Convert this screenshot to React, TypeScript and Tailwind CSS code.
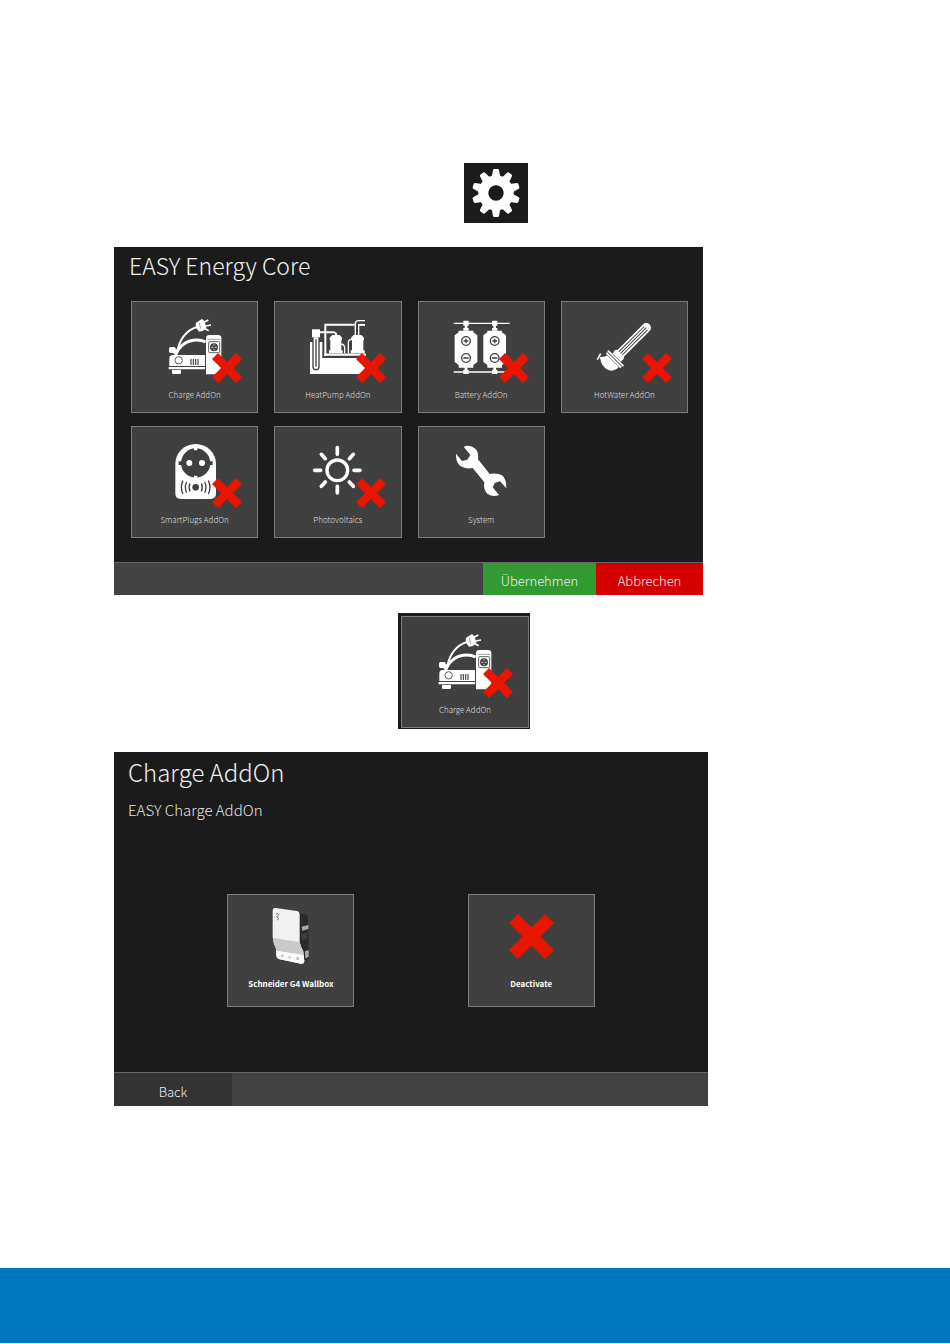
import type { ReactNode } from "react";

const FACE = "font-['Noto_Sans_CJK_SC','Noto_Sans',sans-serif]";
const DARK = "#404040";

function Cross({ className }: { className: string }) {
  return (
    <svg viewBox="0 0 90 90" className={className} aria-hidden="true">
      <path d="M18 0 45 27 72 0 90 18 63 45 90 72 72 90 45 63 18 90 0 72 27 45 0 18Z" fill="#e81500" />
    </svg>
  );
}

function Icon({ box, children }: { box: string; children: ReactNode }) {
  return (
    <svg viewBox={box} className="size-14 shrink-0 overflow-visible" fill="none" aria-hidden="true">
      {children}
    </svg>
  );
}

function ChargeIcon() {
  return (
    <Icon box="115 63 168 168">
      <path d="M146 164C150 128 172 96 206 87" stroke="#fff" strokeWidth="6" />
      <path d="M152 150C160 124 178 102 203 91" stroke={DARK} strokeWidth="1" strokeDasharray="3 3" />
      <path d="M202 74 220 63 228 70 233 91 222 99 211 101 201 88Z" fill="#fff" />
      <path d="M226 73 239 66M231 84 247 81M229 92 240 98" stroke="#fff" strokeWidth="5" />
      <path d="M212 75 216 92" stroke={DARK} strokeWidth="1.5" />
      <path d="M141 172C149 142 178 126 204 126Q220 126 231 132" stroke="#fff" strokeWidth="9" />
      <rect x="121" y="147" width="20" height="18" rx="5" fill="#fff" />
      <path d="M141 152 150 158 142 172 134 166Z" fill="#fff" />
      <path d="M132 171H229V204H122V182Q122 171 132 171Z" fill="#fff" />
      <path d="M120 207H229V214H120Z" fill="#fff" />
      <path d="M130 216H157V224Q157 228 153 228H134Q130 228 130 224Z" fill="#fff" />
      <circle cx="150" cy="187" r="11" stroke={DARK} strokeWidth="2.5" />
      <path d="M187 183V201M194 183V201M201 183V201M208 183V201" stroke={DARK} strokeWidth="3.5" />
      <path d="M232 229V121Q232 111 242 111H268Q278 111 278 121V229Z" fill="#fff" />
      <path d="M237 124H274" stroke={DARK} strokeWidth="1.5" />
      <rect x="240" y="131" width="33" height="33" rx="3" stroke={DARK} strokeWidth="2.5" />
      <circle cx="256" cy="148" r="12" fill={DARK} />
      <path d="M248 148H254M258 148H264M256 139V143M256 153V157" stroke="#fff" strokeWidth="2.5" />
    </Icon>
  );
}

function HeatPumpIcon() {
  return (
    <Icon box="115 63 168 168">
      <path d="M115 132H152V180H283V228H115Z" fill="#fff" />
      <path d="M161 174V80H280" stroke="#fff" strokeWidth="6" />
      <path d="M158 170H283" stroke="#fff" strokeWidth="7" />
      <path d="M256 114V80Q256 70 265 70H280" stroke={DARK} strokeWidth="14" />
      <path d="M251 114V78Q251 68 261 68H280M261 114V80H280" stroke="#fff" strokeWidth="4" />
      <path d="M143 103H184Q194 103 194 114" stroke="#fff" strokeWidth="6" />
      <path d="M124 116V206A9 9 0 0 0 142 206V116Z" fill="#fff" stroke={DARK} strokeWidth="4" />
      <path d="M133 124V206" stroke={DARK} strokeWidth="4" />
      <rect x="121" y="94" width="24" height="24" fill="#fff" />
      <path d="M182 111H204L211 119V127H209V157H213V166H172V157H176V127H174V119Z" fill="#fff" />
      <path d="M246 111H269L277 119V127H275V157H279V166H237V157H241V127H238V119Z" fill="#fff" />
      <path d="M209 138Q219 140 219 150V166" stroke="#fff" strokeWidth="4" />
      <path d="M230 166V134Q230 124 240 124" stroke="#fff" strokeWidth="4" />
    </Icon>
  );
}

function Cell({ x }: { x: number }) {
  return (
    <g transform={`translate(${x} 0)`}>
      <path d="M-8 68H8V83H-8ZM-8 215H8V228H-8ZM-4 83H4V92H-4ZM-8 90H8V98H-8ZM-4 207H4V216H-4Z" fill="#fff" />
      <path d="M-22 98H22V103L34 112V192L22 201V209H-22V201L-34 192V112L-22 103Z" fill="#fff" />
      <circle cy="129" r="13" stroke={DARK} strokeWidth="4" />
      <circle cy="180" r="13" stroke={DARK} strokeWidth="4" />
      <path d="M-7 129H7M0 122V136M-8 180H8" stroke={DARK} strokeWidth="4" />
    </g>
  );
}

function BatteryIcon() {
  return (
    <Icon box="118 63 168 168">
      <path d="M120 76H288M120 222H288" stroke="#fff" strokeWidth="4" />
      <Cell x={157} />
      <Cell x={243} />
    </Icon>
  );
}

function HotWaterIcon() {
  return (
    <Icon box="115 63 168 168">
      <g transform="translate(174 181) rotate(-45)">
        <path d="M10-14H130A14 14 0 0 1 130 14H10Z" fill="#fff" />
        <path d="M20-7H128M20 0H130M20 7H128" stroke={DARK} strokeWidth="3" />
        <path d="M4-18H16Q20-18 20-14V14Q20 18 16 18H4Z" fill="#fff" />
        <path d="M0-33V33" stroke="#fff" strokeWidth="5" />
        <path d="M-8-31V31" stroke="#fff" strokeWidth="6" />
        <path d="M-12-25V25Q-22 27-32 20Q-45 10-43-8L-38-25Z" fill="#fff" />
      </g>
      <path d="M126 178 150 174 160 190 134 202Z" fill="#fff" />
      <path d="M129 167 119 185" stroke="#fff" strokeWidth="5" />
    </Icon>
  );
}

function SmartPlugIcon() {
  return (
    <Icon box="115 66 168 168">
      <path d="M140 126A61 60 0 0 1 262 126V214Q262 231 245 231H157Q140 231 140 214Z" fill="#fff" />
      <circle cx="201" cy="123" r="44" fill={DARK} />
      <path d="M150 118H160V129H150ZM242 118H252V129H242Z" fill={DARK} />
      <path d="M196 78H206V85H196ZM196 161H206V168H196Z" fill="#fff" />
      <circle cx="182" cy="123" r="9" fill="#fff" />
      <circle cx="220" cy="123" r="9" fill="#fff" />
      <circle cx="201" cy="196" r="10" fill={DARK} />
      <path d="M184 184Q178 196 184 208M174 180Q166 196 174 212M163 176Q153 196 163 216M218 184Q224 196 218 208M228 180Q236 196 228 212M239 176Q249 196 239 216" stroke={DARK} strokeWidth="4" />
    </Icon>
  );
}

function SunIcon() {
  return (
    <Icon box="115 66 168 168">
      <circle cx="197" cy="145" r="31" stroke="#fff" strokeWidth="10" />
      <path d="M197 77V97M197 193V213M129 145H147M247 145H265M149 97 161 110M245 97 233 110M149 193 161 180M245 193 233 180" stroke="#fff" strokeWidth="11" strokeLinecap="round" />
    </Icon>
  );
}

function WrenchIcon() {
  return (
    <Icon box="545 66 168 168">
      <path
        d="M577 74Q596 67 612 80Q623 91 620 112L655 156Q676 152 692 160Q706 171 705 199L686 178L671 182L664 196L683 219Q665 226 649 216Q635 203 639 181L604 138Q582 142 567 132Q553 121 554 95L572 117L588 113L597 99Z"
        fill="#fff"
      />
    </Icon>
  );
}

function WallboxIcon() {
  return (
    <Icon box="458 490 168 168">
      <path d="M564 502 592 512 596 640 578 652 568 600Z" fill="#292a2d" />
      <path d="M574 546 594 541V553L576 558ZM584 620 595 616V636L585 642Z" fill="#a9abae" />
      <path d="M572 570 590 564V580L576 588Z" fill="#3d4046" />
      <path d="M487 497Q487 489 496 490L560 499Q568 501 568 508V592Q570 604 578 618L582 648Q582 658 572 657L508 644Q498 641 498 632L497 612Q489 596 487 578Z" fill="#f1f1f2" />
      <path d="M488 580 568 592Q570 606 580 622V632L499 619 497 612Q489 598 488 580Z" fill="#c9cacc" />
      <path d="M498 618 580 631 582 648Q582 658 572 657L508 644Q498 641 498 632Z" fill="#fafafa" />
      <path d="M497 508Q503 503 505 510L499 517 505 521 501 527" stroke="#6b6d70" strokeWidth="3" />
      <circle cx="516" cy="634" r="3.5" fill="#b5b6b8" />
      <circle cx="538" cy="638" r="3.5" fill="#c4c5c7" />
      <circle cx="562" cy="642" r="4" fill="#aeb0b2" />
    </Icon>
  );
}

function GearIcon() {
  const teeth = [0, 36, 72, 108, 144, 180, 216, 252, 288, 324];
  return (
    <svg viewBox="-72 -72 144 144" className="size-12" aria-hidden="true">
      <g fill="#fff">
        {teeth.map((angle) => (
          <path key={angle} d="M-13-48-9-69Q-8-72-5-72H5Q8-72 9-69L13-48Z" transform={`rotate(${angle})`} />
        ))}
        <circle r="53" />
      </g>
      <circle r="23" fill="#1b1b1b" />
    </svg>
  );
}

type TileProps = { label: string; icon: ReactNode; inactive?: boolean };

function Tile({ label, icon, inactive }: TileProps) {
  return (
    <button type="button" className="relative flex h-28 w-full flex-col items-center border border-[#7c7c7c] bg-[#404040] pt-[17px]">
      {icon}
      <span className="mt-3.5 text-[8px] leading-3 font-light whitespace-nowrap text-[#dedede]">{label}</span>
      {inactive && <Cross className="absolute top-[51px] right-[15px] size-[30px]" />}
    </button>
  );
}

function Choice({ label, icon }: TileProps) {
  return (
    <button type="button" className="flex h-[113px] w-[127px] flex-col items-center border border-[#7c7c7c] bg-[#404040] pt-[13px]">
      <span className="flex size-14 items-center justify-center">{icon}</span>
      <span className="mt-3.5 text-[8px] leading-3 font-bold whitespace-nowrap text-white">{label}</span>
    </button>
  );
}

const addOns: TileProps[] = [
  { label: "Charge AddOn", icon: <ChargeIcon />, inactive: true },
  { label: "HeatPump AddOn", icon: <HeatPumpIcon />, inactive: true },
  { label: "Battery AddOn", icon: <BatteryIcon />, inactive: true },
  { label: "HotWater AddOn", icon: <HotWaterIcon />, inactive: true },
  { label: "SmartPlugs AddOn", icon: <SmartPlugIcon />, inactive: true },
  { label: "Photovoltaics", icon: <SunIcon />, inactive: true },
  { label: "System", icon: <WrenchIcon /> },
];

export default function App() {
  return (
    <div className={`flex min-h-screen flex-col bg-white ${FACE}`}>
      <main className="flex flex-col px-[114px] pt-[163px] pb-20">
        <button type="button" aria-label="Settings" className="ml-[350px] flex h-[60px] w-16 items-center justify-center bg-[#1b1b1b]">
          <GearIcon />
        </button>

        <section className="mt-6 w-full max-w-[589px] bg-[#1b1b1b]">
          <h1 className="px-[15px] pt-0.5 text-[23px] leading-8 font-light text-[#f2f2f2]">EASY Energy Core</h1>
          <div className="mt-5 grid grid-cols-4 gap-x-4 gap-y-[13px] pr-[15px] pl-[17px]">
            {addOns.map((addOn) => (
              <Tile key={addOn.label} {...addOn} />
            ))}
          </div>
          <div className="mt-6 flex h-[33px] justify-end border-t border-[#666] bg-[#424242] text-[13px] font-light text-[#eee]">
            <button type="button" className="w-[113px] bg-[#339933] pt-1">Übernehmen</button>
            <button type="button" className="w-[107px] bg-[#d40000] pt-1">Abbrechen</button>
          </div>
        </section>

        <div className="mt-[18px] ml-[284px] w-[132px] bg-[#1b1b1b] pt-[3px] pr-px pb-px pl-[3px]">
          <Tile label="Charge AddOn" icon={<ChargeIcon />} inactive />
        </div>

        <section className="mt-[23px] w-full max-w-[594px] bg-[#1b1b1b]">
          <h2 className="px-3.5 pt-1 text-[24px] leading-8 font-light text-[#f2f2f2]">Charge AddOn</h2>
          <p className="mt-2.5 px-3.5 text-[15px] leading-6 font-light text-[#e4e4e4]">EASY Charge AddOn</p>
          <div className="mt-[72px] flex justify-evenly">
            <Choice label="Schneider G4 Wallbox" icon={<WallboxIcon />} />
            <Choice label="Deactivate" icon={<Cross className="size-[45px]" />} />
          </div>
          <div className="mt-[65px] flex h-[34px] border-t border-[#666] bg-[#424242] text-[13px] font-light text-[#eee]">
            <button type="button" className="w-[118px] bg-[#333] pt-1">Back</button>
          </div>
        </section>
      </main>
      <footer className="mt-auto mb-px h-[75px] bg-[#0077c0]" />
    </div>
  );
}
